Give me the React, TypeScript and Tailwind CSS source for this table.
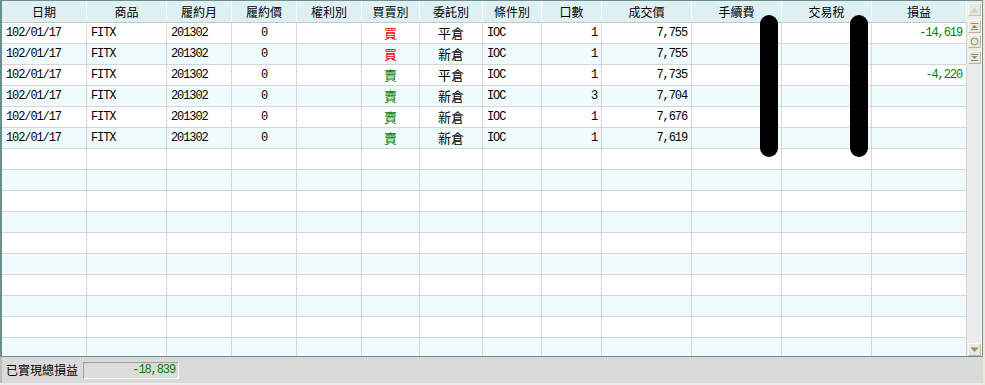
import React from 'react';

type Align = 'left' | 'center' | 'right';

interface Col {
  title: string;
  width: string;
  align: Align;
}

const columns: Col[] = [
  { title: '日期', width: 'w-[85px]', align: 'left' },
  { title: '商品', width: 'w-[80px]', align: 'left' },
  { title: '履約月', width: 'w-[65px]', align: 'left' },
  { title: '履約價', width: 'w-[65px]', align: 'center' },
  { title: '權利別', width: 'w-[65px]', align: 'center' },
  { title: '買賣別', width: 'w-[58px]', align: 'center' },
  { title: '委託別', width: 'w-[63px]', align: 'center' },
  { title: '條件別', width: 'w-[59px]', align: 'left' },
  { title: '口數', width: 'w-[60px]', align: 'right' },
  { title: '成交價', width: 'w-[90px]', align: 'right' },
  { title: '手續費', width: 'w-[90px]', align: 'right' },
  { title: '交易稅', width: 'w-[90px]', align: 'right' },
  { title: '損益', width: 'w-[95px]', align: 'right' },
];

type Side = 'buy' | 'sell';

interface Trade {
  side: Side;
  kind: string;
  qty: string;
  price: string;
  pnl: string;
}

const trades: Trade[] = [
  { side: 'buy', kind: '平倉', qty: '1', price: '7,755', pnl: '-14,619' },
  { side: 'buy', kind: '新倉', qty: '1', price: '7,755', pnl: '' },
  { side: 'sell', kind: '平倉', qty: '1', price: '7,735', pnl: '-4,220' },
  { side: 'sell', kind: '新倉', qty: '3', price: '7,704', pnl: '' },
  { side: 'sell', kind: '新倉', qty: '1', price: '7,676', pnl: '' },
  { side: 'sell', kind: '新倉', qty: '1', price: '7,619', pnl: '' },
];

const alignClass: Record<Align, string> = {
  left: 'justify-start pl-[4px]',
  center: 'justify-center',
  right: 'justify-end pr-[4px]',
};

const cjk = "font-['Noto_Sans_CJK_TC',sans-serif]";
const mono = "font-['Liberation_Mono','Noto_Sans_CJK_TC',monospace] tracking-[-1.1px]";

function Cell({ col, children }: { col: Col; children?: React.ReactNode }) {
  return (
    <div
      className={`${col.width} shrink-0 h-full flex items-center border-r border-[#d6d6d6] overflow-hidden whitespace-nowrap ${alignClass[col.align]}`}
    >
      {children}
    </div>
  );
}

function ScrollButton({ children, className = '' }: { children: React.ReactNode; className?: string }) {
  return (
    <div
      className={`w-[13px] h-[13px] flex items-center justify-center bg-[#ebe8da] border border-t-[#fbfaf4] border-l-[#fbfaf4] border-b-[#b8b4a0] border-r-[#b8b4a0] ${className}`}
    >
      {children}
    </div>
  );
}

export default function App() {
  // 15 full rows + one clipped at the bottom
  const rows = Array.from({ length: 16 }, (_, i) => trades[i] || null);

  return (
    <div className="w-[985px] h-[385px] bg-[#e6ecdc] overflow-hidden text-[12px] text-black">
      <div className="w-[983px] flex flex-col">
        {/* Grid */}
        <div className="relative h-[357px] flex border-t border-l-2 border-b border-r border-[#6b8e8e] bg-white">
          <div className="w-[965px] shrink-0 flex flex-col overflow-hidden">
            {/* Header */}
            <div className={`h-[22px] shrink-0 flex bg-[#dff0f3] border-b border-[#b9cdd0] ${cjk}`}>
              {columns.map((col) => (
                <div
                  key={col.title}
                  className={`${col.width} shrink-0 h-full flex items-center justify-center border-r border-[#f4fbfc]`}
                >
                  {col.title}
                </div>
              ))}
            </div>

            {/* Body */}
            {rows.map((t, i) => (
              <div
                key={i}
                className={`h-[21px] shrink-0 flex border-b border-[#d6d6d6] ${i % 2 === 0 ? 'bg-white' : 'bg-[#f0fbfe]'}`}
              >
                <Cell col={columns[0]}>{t && <span className={mono}>102/01/17</span>}</Cell>
                <Cell col={columns[1]}>{t && <span className={mono}>FITX</span>}</Cell>
                <Cell col={columns[2]}>{t && <span className={mono}>201302</span>}</Cell>
                <Cell col={columns[3]}>{t && <span className={mono}>0</span>}</Cell>
                <Cell col={columns[4]} />
                <Cell col={columns[5]}>
                  {t && (
                    <span className={`${cjk} text-[13px] ${t.side === 'buy' ? 'text-[#ff0000]' : 'text-[#008000]'}`}>
                      {t.side === 'buy' ? '買' : '賣'}
                    </span>
                  )}
                </Cell>
                <Cell col={columns[6]}>{t && <span className={`${cjk} text-[13px]`}>{t.kind}</span>}</Cell>
                <Cell col={columns[7]}>{t && <span className={mono}>IOC</span>}</Cell>
                <Cell col={columns[8]}>{t && <span className={mono}>{t.qty}</span>}</Cell>
                <Cell col={columns[9]}>{t && <span className={mono}>{t.price}</span>}</Cell>
                <Cell col={columns[10]} />
                <Cell col={columns[11]} />
                <Cell col={columns[12]}>
                  {t && t.pnl && <span className={`${mono} text-[#008000]`}>{t.pnl}</span>}
                </Cell>
              </div>
            ))}
          </div>

          {/* Scrollbar */}
          <div className="w-[14px] shrink-0 bg-[#ececec] flex flex-col items-center pt-[2px]">
            <ScrollButton className="opacity-70">
              <svg width="9" height="6" viewBox="0 0 9 6">
                <path d="M0.5 5.5 L4.5 1 L8.5 5.5 Z" fill="#c4c0b0" />
              </svg>
            </ScrollButton>
            <div className="h-[4px]" />
            <ScrollButton>
              <svg width="9" height="9" viewBox="0 0 9 9">
                <path d="M1 1.5 H8" stroke="#8c8878" strokeWidth="1" />
                <path d="M1.5 6 L4.5 3 L7.5 6 Z" fill="#8c8878" />
                <path d="M1 7.5 H8" stroke="#8c8878" strokeWidth="1" />
              </svg>
            </ScrollButton>
            <div className="h-[2px]" />
            <ScrollButton>
              <svg width="9" height="9" viewBox="0 0 9 9">
                <circle cx="4.5" cy="4.5" r="3.4" fill="none" stroke="#8c8878" strokeWidth="1" />
              </svg>
            </ScrollButton>
            <div className="h-[3px]" />
            <ScrollButton>
              <svg width="9" height="9" viewBox="0 0 9 9">
                <path d="M1 1.5 H8" stroke="#8c8878" strokeWidth="1" />
                <path d="M1.5 3 L4.5 6 L7.5 3 Z" fill="#8c8878" />
                <path d="M1 7.5 H8" stroke="#8c8878" strokeWidth="1" />
              </svg>
            </ScrollButton>
            <div className="flex-1" />
            <ScrollButton>
              <svg width="9" height="6" viewBox="0 0 9 6">
                <path d="M0.5 0.5 L4.5 5 L8.5 0.5 Z" fill="#8c8878" />
              </svg>
            </ScrollButton>
          </div>

          {/* Redaction marks */}
          <div className="absolute left-[758px] top-[14px] w-[18px] h-[142px] rounded-full bg-black" />
          <div className="absolute left-[848px] top-[14px] w-[18px] h-[142px] rounded-full bg-black" />
        </div>

        {/* Status bar */}
        <div className="h-[26px] flex items-center bg-[#dadada] border-l-2 border-[#bdbdbd]">
          <span className={`pl-[4px] w-[81px] shrink-0 whitespace-nowrap text-[12px] ${cjk}`}>已實現總損益</span>
          <div className="w-[96px] h-[17px] flex items-center justify-end pr-[3px] bg-[#dcdcdc] border border-t-[#a0a0a0] border-l-[#a0a0a0] border-b-white border-r-white">
            <span className={`${mono} text-[#008000]`}>-18,839</span>
          </div>
        </div>
        <div className="h-[2px] bg-[#ececec]" />
      </div>
    </div>
  );
}
